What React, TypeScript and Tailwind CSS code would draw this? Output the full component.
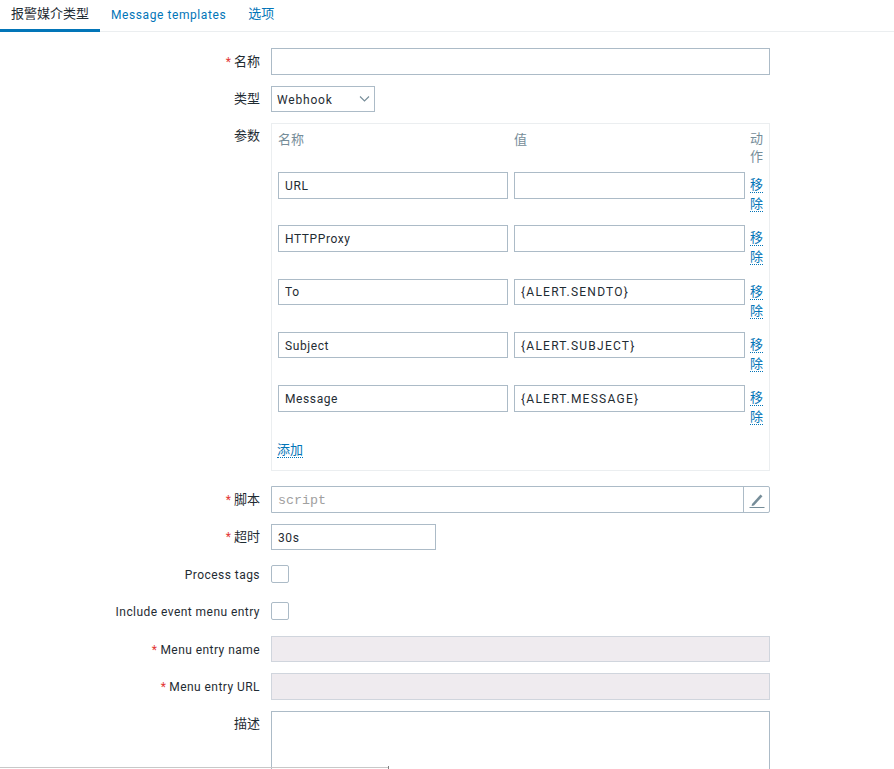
const font = { fontFamily: 'Roboto, "Noto Sans CJK SC", sans-serif' };

const params = [
  { name: "URL", value: "" },
  { name: "HTTPProxy", value: "" },
  { name: "To", value: "{ALERT.SENDTO}" },
  { name: "Subject", value: "{ALERT.SUBJECT}" },
  { name: "Message", value: "{ALERT.MESSAGE}" },
];

const inputClass =
  "h-full w-full border border-[#acbbc7] bg-white px-[6px] pt-[1px] text-[12px] text-[#1f2c33] outline-none";

function Label({
  text,
  required,
  top,
  cjk,
  nudge,
}: {
  text: string;
  required?: boolean;
  top?: boolean;
  cjk?: boolean;
  nudge?: boolean;
}) {
  return (
    <div
      className={`w-[260px] shrink-0 whitespace-nowrap text-right text-[#1f2c33] ${
        cjk ? "text-[13px]" : "pt-[2px] text-[12px] tracking-[0.45px]"
      } ${top ? "pt-[3px]" : "self-center"} ${nudge ? "-mt-[2px]" : ""}`}
    >
      {required && <span className="mr-[3px] text-[12px] text-[#e33734]">*</span>}
      {text}
    </div>
  );
}

function Row({
  text,
  required,
  top,
  cjk,
  nudge,
  className,
  children,
}: {
  text: string;
  required?: boolean;
  top?: boolean;
  cjk?: boolean;
  nudge?: boolean;
  className: string;
  children: React.ReactNode;
}) {
  return (
    <div className={`flex gap-[11px] ${className}`}>
      <Label text={text} required={required} top={top} cjk={cjk} nudge={nudge} />
      {children}
    </div>
  );
}

function Checkbox() {
  return <div className="h-[18px] w-[18px] rounded-[2px] border border-[#acbbc7] bg-white" />;
}

export default function App() {
  return (
    <div className="relative h-[769px] w-[894px] overflow-hidden bg-white" style={font}>
      <div className="flex h-[32px] border-b border-[#ebeef0]">
        <div className="flex h-[32px] w-[100px] items-center justify-center border-b-[3px] border-[#0275b8] pb-[2px] text-[13px] text-[#1f2c33]">
          报警媒介类型
        </div>
        <div className="flex h-[31px] items-center pb-[2px] pl-[11px] pr-[11px] text-[12px] tracking-[0.58px] text-[#0275b8]">
          Message templates
        </div>
        <div className="flex h-[31px] items-center pb-[3px] pl-[11px] text-[13px] text-[#0275b8]">选项</div>
      </div>

      <Row text="名称" cjk required className="mt-[16px] h-[27px]">
        <div className="w-[499px]">
          <input className={inputClass} />
        </div>
      </Row>

      <Row text="类型" cjk className="mt-[11px] h-[26px]">
        <div className="relative w-[104px]">
          <div className="flex h-full items-center border border-[#acbbc7] px-[5px] pt-[1px] text-[12px] tracking-[0.8px] text-[#1f2c33]">
            Webhook
          </div>
          <svg
            className="absolute right-[5px] top-[9px] h-[7px] w-[11px]"
            viewBox="0 0 11 7"
            fill="none"
            stroke="#768d99"
            strokeWidth="1.1"
          >
            <path d="M1 1.5 L5.5 6 L10 1.5" />
          </svg>
        </div>
      </Row>

      <Row text="参数" cjk top className="mt-[11px]">
        <div className="h-[348px] w-[499px] border border-[#ebeef0] pl-[6px]">
          <div className="flex h-[48px] text-[13px] text-[#768d99]">
            <div className="w-[236px] pt-[6px]">名称</div>
            <div className="w-[236px] pt-[6px]">值</div>
            <div className="w-[13px] pt-[6px] leading-[18px]">动作</div>
          </div>
          {params.map((p) => (
            <div key={p.name} className="flex h-[53.25px]">
              <div className="h-[26.5px] w-[230px] tracking-[0.6px]">
                <input className={inputClass} defaultValue={p.name} />
              </div>
              <div className="ml-[6px] h-[26.5px] w-[231px] tracking-[1.25px]">
                <input className={inputClass} defaultValue={p.value} />
              </div>
              <div className="ml-[5px] w-[13px] pt-[3px] text-[13px] leading-[19px] text-[#0275b8]">
                <span className="border-b border-dotted border-[#0275b8]">移除</span>
              </div>
            </div>
          ))}
          <div className="mt-[2px] -ml-[1px] text-[13px] text-[#0275b8]">
            <span className="border-b border-dotted border-[#0275b8]">添加</span>
          </div>
        </div>
      </Row>

      <Row text="脚本" cjk required className="mt-[15px] h-[27px]">
        <div className="flex w-[499px] rounded-r-[2px] border border-[#acbbc7]">
          <input
            className="h-full min-w-0 flex-1 px-[6px] pt-[1px] text-[13.33px] outline-none placeholder:text-[#a0a0a0]"
            style={{ fontFamily: '"Liberation Mono", monospace' }}
            placeholder="script"
          />
          <div className="flex w-[26px] items-center justify-center border-l border-[#acbbc7]">
            <svg className="h-[18px] w-[18px]" viewBox="0 0 18 18" fill="none">
              <path d="M4 13 L12.5 3.5 L14.5 5.3 L6 14.5 L3.6 15 Z" fill="#768d99" />
              <path d="M1.5 16.5 H16.5" stroke="#768d99" strokeWidth="1" />
            </svg>
          </div>
        </div>
      </Row>

      <Row text="超时" cjk required className="mt-[11px] h-[26px]">
        <div className="w-[165px] tracking-[0.6px]">
          <input className={inputClass} defaultValue="30s" />
        </div>
      </Row>

      <Row text="Process tags" className="mt-[15px] h-[18px]">
        <Checkbox />
      </Row>

      <Row text="Include event menu entry" className="mt-[19px] h-[18px]">
        <Checkbox />
      </Row>

      <Row text="Menu entry name" required className="mt-[16px] h-[26px]">
        <div className="w-[499px] border border-[#d0d5dd] bg-[#efebef]" />
      </Row>

      <Row text="Menu entry URL" required nudge className="mt-[11px] h-[27px]">
        <div className="w-[499px] border border-[#d0d5dd] bg-[#efebef]" />
      </Row>

      <Row text="描述" cjk top className="mt-[11px] h-[80px]">
        <div className="w-[499px] border border-[#acbbc7] bg-white" />
      </Row>

      <div className="absolute bottom-[1px] left-0 h-px w-[388px] bg-[#c8c8c8]" />
      <div className="absolute bottom-0 left-[388px] h-[3px] w-px bg-[#808080]" />
    </div>
  );
}
